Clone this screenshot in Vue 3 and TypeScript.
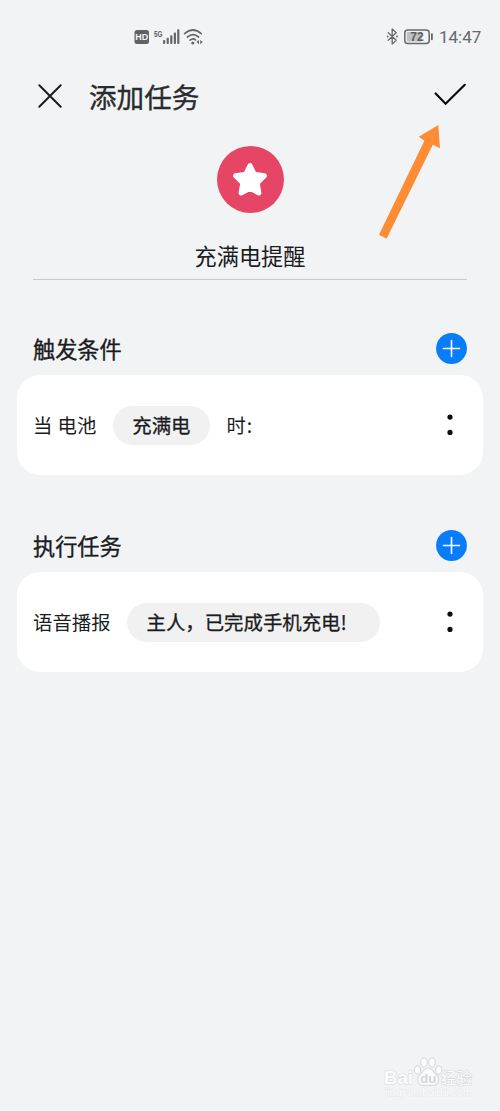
<script setup lang="ts">
interface Section {
  title: string
  before: string
  value: string
  after: string
  wide: boolean
}

const sections: Section[] = [
  { title: '触发条件', before: '当 电池', value: '充满电', after: '时:', wide: false },
  { title: '执行任务', before: '语音播报', value: '主人，已完成手机充电!', after: '', wide: true },
]
</script>

<template>
  <main class="screen">
    <div class="status">
      <svg class="signals" width="70" height="20" viewBox="0 0 70 20">
        <rect x="0.5" y="3" width="14.5" height="14" rx="2.5" fill="#606264" />
        <text x="7.8" y="13.4" text-anchor="middle" font-size="9" font-weight="700" fill="#f1f3f5">HD</text>
        <text x="20" y="9.6" font-size="9" font-weight="700" textLength="8.5" lengthAdjust="spacingAndGlyphs" fill="#606264">5G</text>
        <g fill="#66686a">
          <rect x="29" y="13" width="2.2" height="4" rx="0.8" />
          <rect x="32.6" y="10.7" width="2.2" height="6.3" rx="0.8" />
          <rect x="36.2" y="8.2" width="2.2" height="8.8" rx="0.8" />
          <rect x="39.8" y="5.5" width="2.2" height="11.5" rx="0.8" />
          <rect x="43.2" y="2.3" width="2.2" height="14.7" rx="0.8" />
        </g>
        <g fill="none" stroke="#66686a" stroke-width="1.7" stroke-linecap="round">
          <path d="M50.6 6.6Q59 -.6 67.2 6.6" />
          <path d="M53.4 10Q59 5.2 64.6 10" />
          <path d="M56 13.2Q59 10.6 61.5 12.9" />
        </g>
        <circle cx="58.8" cy="16" r="1.6" fill="#66686a" />
        <path d="m65 12.9-2.6 2.2 2.6 2.2zM66.2 12.9l2.6 2.2-2.6 2.2z" fill="#66686a" />
      </svg>
      <div class="power">
        <svg width="48" height="20" viewBox="0 0 48 20">
          <g fill="none" stroke="#66686a" stroke-width="1.3" stroke-linejoin="round" stroke-linecap="round">
            <path d="m2.2 5.7 8 7.6-4 3.8V1.9l4 3.8-8 7.6" />
          </g>
          <circle cx="1.6" cy="9.5" r="0.9" fill="#66686a" />
          <circle cx="11" cy="9.5" r="0.9" fill="#66686a" />
          <rect x="18.8" y="3" width="24.4" height="13.4" rx="3" fill="none" stroke="#66686a" stroke-width="1.5" />
          <rect x="20.8" y="5" width="15" height="9.4" rx="1" fill="#bfc1c3" />
          <text x="31" y="13.8" text-anchor="middle" font-size="12" font-weight="700" fill="#5d5f61">72</text>
          <rect x="45" y="6.2" width="1.8" height="7" rx="0.7" fill="#66686a" />
        </svg>
        <span class="clock">14:47</span>
      </div>
    </div>

    <header class="bar">
      <svg width="26" height="26" viewBox="0 0 26 26">
        <path d="m2.3 2.3 21.4 21.4M23.7 2.3 2.3 23.7" fill="none" stroke="#1b1c1d" stroke-width="2" stroke-linecap="round" />
      </svg>
      <h1>添加任务</h1>
      <svg class="check" width="34" height="26" viewBox="0 0 34 26">
        <path d="M2.6 10.5 12.6 20.8 31.8 1.8" fill="none" stroke="#0c0d0e" stroke-width="2.2" stroke-linecap="round" />
      </svg>
    </header>

    <svg class="pointer" width="64" height="118" viewBox="0 0 64 118">
      <path d="M60.3 3 62 26.3 54.8 22.7 8.6 116.7 1 112.7 46.4 18.7 40.8 14.8Z" fill="#fd8c34" />
    </svg>

    <div class="badge">
      <svg width="36" height="36" viewBox="0 0 36 36">
        <path d="M18 3.6 22.2 12.2 32.4 13.8 25.2 21 26.9 31 18 26.4 9.1 31 10.8 21 3.6 13.8 13.8 12.2Z" fill="#fff" stroke="#fff" stroke-width="5" stroke-linejoin="round" />
      </svg>
    </div>
    <div class="name">充满电提醒</div>

    <section v-for="section in sections" :key="section.title" class="group">
      <div class="heading">
        <h2>{{ section.title }}</h2>
        <svg width="31" height="31" viewBox="0 0 31 31">
          <circle cx="15.5" cy="15.5" r="15.4" fill="#087dfa" />
          <path d="M7.5 15.5h16M15.5 7.5v16" stroke="#fff" stroke-width="1.6" stroke-linecap="round" />
        </svg>
      </div>
      <div class="card">
        <span class="label">{{ section.before }}</span>
        <span class="chip" :class="{ wide: section.wide }">{{ section.value }}</span>
        <span v-if="section.after" class="label suffix">{{ section.after }}</span>
        <svg class="more" width="8" height="24" viewBox="0 0 8 24">
          <circle cx="4" cy="4.1" r="2.6" fill="#0c0d0e" />
          <circle cx="4" cy="19.4" r="2.6" fill="#0c0d0e" />
        </svg>
      </div>
    </section>

    <svg class="mark" width="96" height="46" viewBox="0 0 96 46">
      <g fill="#fcfcfd" stroke="#d9dbdd" stroke-width="1.2">
        <text x="2" y="30" font-size="19" font-weight="700" textLength="29" lengthAdjust="spacingAndGlyphs" paint-order="stroke">Bai</text>
        <ellipse cx="35.5" cy="16" rx="3.2" ry="4.2" />
        <ellipse cx="42" cy="8.5" rx="3.3" ry="4.6" />
        <ellipse cx="50" cy="8.5" rx="3.3" ry="4.6" />
        <ellipse cx="56.7" cy="16" rx="3.2" ry="4.2" />
        <path d="M46.2 14c4 0 5.2 4.2 8.2 6.8 4 3.6 2.6 10.6-2.8 10.6H40.8c-5.4 0-6.8-7-2.8-10.6 3-2.6 4.2-6.8 8.2-6.8Z" />
        <text x="59" y="30" font-size="16" textLength="31" lengthAdjust="spacingAndGlyphs" paint-order="stroke">经验</text>
      </g>
      <text x="46.2" y="29" text-anchor="middle" font-size="13" font-weight="700" fill="#d3d5d7">du</text>
      <text x="3" y="42" font-size="10" textLength="87" lengthAdjust="spacingAndGlyphs" fill="#fafbfc" stroke="#e6e8ea" stroke-width="0.8" paint-order="stroke">jingyan.baidu.com</text>
    </svg>
  </main>
</template>

<style>
body {
  background: #f1f3f5;
}
</style>

<style scoped>
.screen {
  position: relative;
  box-sizing: border-box;
  width: 500px;
  height: 1111px;
  overflow: hidden;
  background: #f1f3f5;
  color: #1b1c1d;
  font-family: "Noto Sans CJK SC", sans-serif;
}

svg {
  display: block;
  flex: none;
}

svg text {
  font-family: "Liberation Sans", "Noto Sans CJK SC", sans-serif;
}

.status {
  display: flex;
  align-items: center;
  justify-content: space-between;
  height: 74px;
  padding: 0 19px 0 134px;
}

.power {
  display: flex;
  align-items: center;
  gap: 5px;
}

.clock {
  width: 42px;
  color: #66686a;
  font: 17px/20px Roboto, sans-serif;
  white-space: nowrap;
}

.bar {
  display: flex;
  align-items: center;
  height: 44px;
  padding: 0 33px 0 37px;
}

h1,
h2 {
  margin: 0;
  font-weight: 400;
  -webkit-text-stroke: 0.35px currentColor;
}

h1 {
  margin-left: 26px;
  color: #2a2b2d;
  font-size: 27.6px;
  line-height: 44px;
}

.check {
  margin-left: auto;
}

.pointer {
  position: absolute;
  left: 378px;
  top: 122px;
}

.badge {
  display: flex;
  align-items: center;
  justify-content: center;
  width: 67px;
  height: 67px;
  margin: 28px auto 0;
  border-radius: 50%;
  background: #e64566;
}

.name {
  height: 66px;
  margin: 0 33px 53px;
  border-bottom: 1px solid #c7c9cb;
  font-size: 22.2px;
  line-height: 84px;
  text-align: center;
}

.group {
  margin: 0 17px 55px;
}

.heading {
  display: flex;
  align-items: center;
  justify-content: space-between;
  height: 31px;
  padding: 0 16px;
}

h2 {
  font-size: 22.2px;
  line-height: 31px;
}

.card {
  display: flex;
  align-items: center;
  box-sizing: border-box;
  height: 100px;
  margin-top: 11px;
  padding: 0 29px 0 16px;
  border-radius: 23px;
  background: #fff;
  font-size: 19.4px;
  line-height: 37px;
  white-space: nowrap;
}

.label {
  padding-bottom: 2px;
  word-spacing: 0.8px;
}

.suffix {
  letter-spacing: 0.8px;
}

.chip {
  box-sizing: border-box;
  height: 39px;
  margin: 0 16.5px;
  padding: 0 19.5px;
  border-radius: 20px;
  background: #f1f1f1;
  -webkit-text-stroke: 0.3px currentColor;
}

.chip.wide {
  width: 253px;
}

.more {
  margin-left: auto;
}

.mark {
  position: absolute;
  left: 382px;
  top: 1054px;
}
</style>
